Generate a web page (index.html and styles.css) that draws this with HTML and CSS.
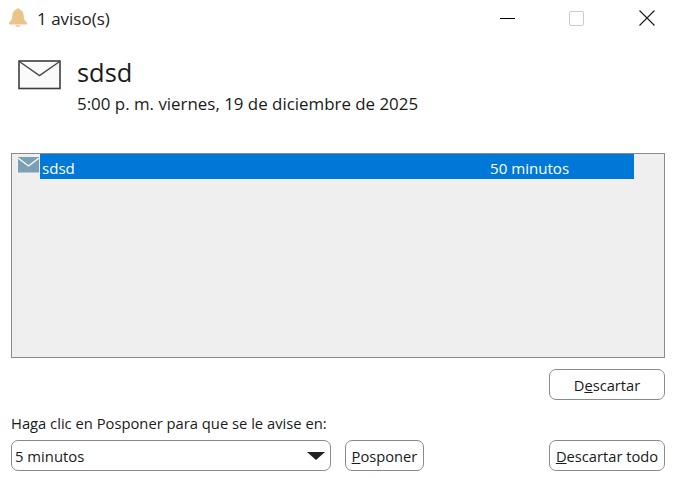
FILE: index.html
```html
<!DOCTYPE html>
<html lang="es">
<head>
<meta charset="utf-8">
<title>1 aviso(s)</title>
<link rel="stylesheet" href="styles.css">
</head>
<body>
<div class="window">
  <header class="titlebar">
    <svg class="bell" width="20" height="20" viewBox="0 0 20 20"><path fill="#ecc48a" d="M10 .5c-1 0-1.700.5-1.900 1.300C5.300 2.500 4.500 4.800 4.300 8c-.2 3.200-1 5.100-3.300 6.500V16.500h18v-2c-2.300-1.400-3.100-3.300-3.300-6.500-.2-3.200-1-5.500-3.800-6.200C11.700 1 11 .5 10 .5z"/><path fill="#ecc48a" d="M7.500 17.300h5c-.2 1-1.200 1.700-2.500 1.700s-2.300-.7-2.500-1.700z"/></svg>
    <span class="title">1 aviso(s)</span>
    <div class="controls">
      <svg class="ctl min" width="15" height="15" viewBox="0 0 15 15"><path stroke="#000" stroke-width="1" d="M0 7.500h15"/></svg>
      <svg class="ctl max" width="15" height="15" viewBox="0 0 15 15"><rect x="0.500" y="0.500" width="14" height="14" rx="1.500" fill="none" stroke="#ccc" stroke-width="1"/></svg>
      <svg class="ctl close" width="16" height="16" viewBox="0 0 16 16"><path stroke="#1a1a1a" stroke-width="1.100" d="M.5.500l15 15M15.500.500l-15 15"/></svg>
    </div>
  </header>
  <section class="summary">
    <svg class="env" width="43" height="30" viewBox="0 0 43 30"><rect x="1" y="1" width="41" height="27.500" fill="#fafafa" stroke="#3f3f3f" stroke-width="1.600"/><path d="M2 2l19.500 13.500L41 2" fill="none" stroke="#4a4a4a" stroke-width="1.500"/></svg>
    <div class="summary-text">
      <div class="subject">sdsd</div>
      <div class="when">5:00 p. m. viernes, 19 de diciembre de 2025</div>
    </div>
  </section>
  <div class="list">
    <div class="row">
      <svg class="row-icon" width="21" height="16" viewBox="0 0 21 16"><rect width="21" height="15.500" fill="#7ba0b3"/><path d="M0 1l10.500 8L21 1" fill="none" stroke="#fff" stroke-width="1.300"/></svg>
      <div class="row-sel"><span class="row-name">sdsd</span><span class="row-due">50 minutos</span></div>
    </div>
  </div>
  <div class="dismiss-line"><button class="btn wide">D<u>e</u>scartar</button></div>
  <div class="hint">Haga clic en Posponer para que se le avise en:</div>
  <div class="actions">
    <div class="select"><span>5 minutos</span><i class="caret"></i></div>
    <button class="btn snooze"><u>P</u>osponer</button>
    <button class="btn wide all"><u>D</u>escartar todo</button>
  </div>
</div>
</body>
</html>
```
FILE: styles.css
```css
* { box-sizing: border-box; }
html, body { margin: 0; padding: 0; }
body { background: #fff; font-family: "Open Sans", "Noto Sans", sans-serif; color: #1a1a1a; }
.window { width: 673px; height: 478px; overflow: hidden; padding: 0 8px 0 11px; }
.titlebar { height: 36px; display: flex; align-items: center; margin-left: -3px; font-size: 17px; }
.bell { margin-right: 10px; }
.title { color: #222; margin-left: -1px; }
.controls { margin-left: auto; display: flex; align-items: center; margin-right: -8px; }
.ctl { display: block; }
.min { margin-right: 55px; }
.max { margin-right: 55px; margin-left: -1px; }
.close { margin-right: 18px; }
.summary { display: flex; margin-top: 24px; padding-left: 7px; }
.env { margin-right: 16px; }
.summary-text { margin-top: -4px; }
.subject { font-size: 25.400px; line-height: 32px; }
.when { font-size: 16.900px; line-height: 22px; margin-top: 5px; }
.list { width: 654px; height: 205px; margin-top: 38px; background: #efefef; border: 1px solid #8a8a8a; }
.row { display: flex; height: 25px; padding-left: 6px; }
.row-icon { margin-top: 3px; margin-right: 1px; }
.row-sel { width: 594px; height: 25px; background: #0078d7; color: #fff; font-size: 15.100px; line-height: 28px; padding-left: 2px; display: flex; }
.row-name { width: 448px; }
.dismiss-line { display: flex; justify-content: flex-end; width: 654px; margin-top: 11px; }
.btn { height: 31px; padding: 0; border: 1px solid #8a8a8a; border-radius: 7px; background: #fff; font: inherit; font-size: 14.700px; color: #1a1a1a; }
.wide { width: 116px; }
.hint { font-size: 14.750px; line-height: 20px; margin-top: 13px; }
.actions { display: flex; width: 654px; margin-top: 7px; }
.select { width: 320px; height: 31px; border: 1px solid #8a8a8a; border-radius: 7px; display: flex; align-items: center; justify-content: space-between; padding: 0 5px 0 3px; font-size: 14.850px; }
.caret { width: 0; height: 0; border-left: 9px solid transparent; border-right: 9px solid transparent; border-top: 8px solid #222; }
.snooze { width: 79px; margin-left: 14px; }
.all { margin-left: auto; }
```
